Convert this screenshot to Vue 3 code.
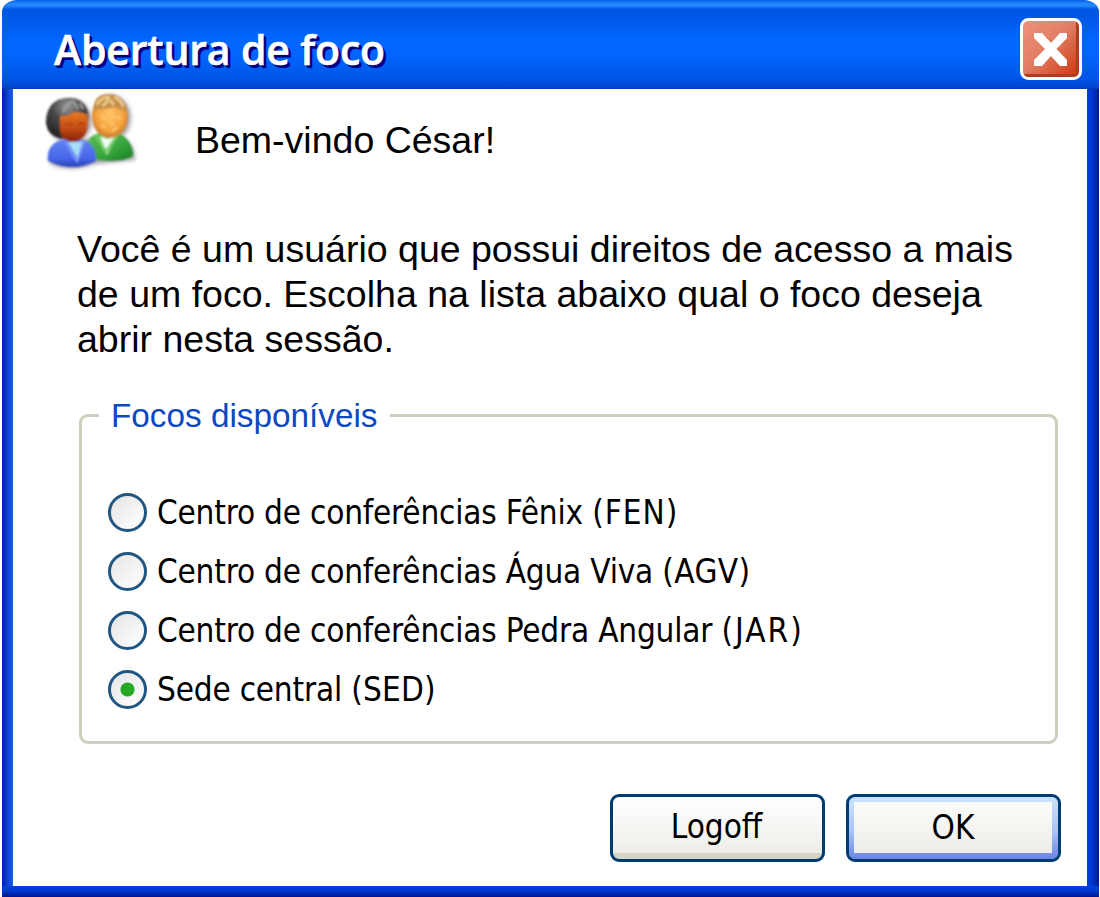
<script setup>
import { ref } from 'vue'

const options = [
  { id: 'FEN', name: 'Centro de conferências Fênix' },
  { id: 'AGV', name: 'Centro de conferências Água Viva' },
  { id: 'JAR', name: 'Centro de conferências Pedra Angular' },
  { id: 'SED', name: 'Sede central' },
]
const selected = ref('SED')
</script>

<template>
  <main class="window">
    <header class="titlebar">
      <h1>Abertura de foco</h1>
      <button class="close" aria-label="Fechar">
        <svg viewBox="0 0 62 62" width="62" height="62">
          <defs>
            <linearGradient id="red" x1="0.1" y1="0.1" x2="1" y2="1">
              <stop offset="0" stop-color="#ec8e78" />
              <stop offset="0.4" stop-color="#e27d64" />
              <stop offset="1" stop-color="#c93208" />
            </linearGradient>
          </defs>
          <rect x="1.5" y="1.5" width="59" height="59" rx="7" fill="url(#red)" />
          <path d="M57.5 4V57.5H4" fill="none" stroke="#b03b20" stroke-width="3" />
          <rect x="1.5" y="1.5" width="59" height="59" rx="7" fill="none" stroke="#fff" stroke-width="3" />
          <path d="M14 15H22L31 25 40 15H47V20L36.5 31 47 42V48H40L31 38 22 48H14V42L25 31 14 20Z" fill="#fff" />
        </svg>
      </button>
    </header>

    <section class="body">
      <div class="welcome">
        <svg class="users" viewBox="0 0 120 95" width="120" height="95">
          <defs>
            <radialGradient id="hair" cx="0.5" cy="0.2" r="0.7"><stop offset="0" stop-color="#999" /><stop offset="0.5" stop-color="#484848" /><stop offset="1" stop-color="#272727" /></radialGradient>
            <linearGradient id="dark" x1="0" y1="0" x2="0" y2="1"><stop offset="0" stop-color="#e57a22" /><stop offset="0.5" stop-color="#c84f14" /><stop offset="1" stop-color="#841f09" /></linearGradient>
            <radialGradient id="light" cx="0.5" cy="0.45" r="0.6"><stop offset="0" stop-color="#ffc568" /><stop offset="0.65" stop-color="#f5a13d" /><stop offset="1" stop-color="#bb6e20" /></radialGradient>
            <linearGradient id="blue" x1="0" y1="0" x2="0" y2="1"><stop offset="0" stop-color="#6384f4" /><stop offset="0.7" stop-color="#4867e9" /><stop offset="1" stop-color="#2641b5" /></linearGradient>
            <linearGradient id="green" x1="0" y1="0" x2="1" y2="1"><stop offset="0" stop-color="#60bb58" /><stop offset="0.6" stop-color="#35a43b" /><stop offset="1" stop-color="#177d21" /></linearGradient>
            <filter id="shade" x="-30%" y="-30%" width="160%" height="160%"><feGaussianBlur stdDeviation="2" /></filter>
            <filter id="soft"><feGaussianBlur stdDeviation="0.9" /></filter>
          </defs>
          <g fill="#554a60" opacity="0.5" filter="url(#shade)">
            <ellipse cx="40" cy="36" rx="22" ry="22" />
            <ellipse cx="83" cy="33" rx="18" ry="22" />
            <path d="M20 79Q20 56 38 56L90 51Q105 58 105 75L65 79Q40 88 20 79Z" />
          </g>
          <g filter="url(#soft)">
            <path d="M57 60Q58 50 70 48H88Q103 55 103 71Q90 79 63 74Z" fill="url(#green)" />
            <path d="M70 51L78 54 87 50 77 70Z" fill="#f0fff0" />
            <path d="M66 50L76 67 88 49" fill="none" stroke="#71ce65" stroke-width="3" />
            <ellipse cx="80" cy="31" rx="18" ry="22" fill="url(#light)" />
            <path d="M63 25Q64 9 78 9Q94 9 97 26Q87 24 84 22Q77 24 63 25Z" fill="#c48d48" />
            <path d="M67 20Q70 13 78 12M79 11Q78 18 72 21M84 12Q92 15 93 22M80 15L84 20" fill="none" stroke="#efd18e" stroke-width="2.5" />
            <path d="M71 31L76 35M79 30L84 34M87 31L91 34M71 40L75 43M79 37L84 40M82 46L87 43" fill="none" stroke="#ffc46b" stroke-width="2.5" />
            <path d="M18 76Q16 62 28 56L41 53 56 56Q67 62 66 76Q43 88 18 76Z" fill="url(#blue)" />
            <path d="M38 57H54L48 74Z" fill="#a7def7" />
            <path d="M36 57L47 76 53 58" fill="none" stroke="#819dff" stroke-width="2" />
            <path d="M16 37Q17 13 39 13Q57 13 59 33L51 48 32 54Q17 51 16 37Z" fill="url(#hair)" />
            <path d="M30 31Q40 31 44 27Q52 27 58 30Q60 55 43 57Q30 56 30 43Z" fill="url(#dark)" />
            <path d="M33 28Q35 18 44 16M44 17L48 24M50 18L53 24" fill="none" stroke="#a0a0a0" stroke-width="2" />
            <path d="M35 40Q39 37 43 40M48 39Q52 37 55 39M39 49Q45 51 51 48" fill="none" stroke="#a9380d" stroke-width="1.5" />
          </g>
        </svg>
        <h2>Bem-vindo César!</h2>
      </div>

      <p class="message">
        <span>Você é um usuário que possui direitos de acesso a mais</span>
        <span>de um foco. Escolha na lista abaixo qual o foco deseja</span>
        <span>abrir nesta sessão.</span>
      </p>

      <fieldset>
        <legend>Focos disponíveis</legend>
        <label v-for="o in options" :key="o.id">
          <input v-model="selected" type="radio" name="foco" :value="o.id" />
          <span>{{ o.name }} <span class="code" :class="o.id.toLowerCase()">({{ o.id }})</span></span>
        </label>
      </fieldset>

      <footer>
        <button class="btn">Logoff</button>
        <button class="btn primary">OK</button>
      </footer>
    </section>
  </main>
</template>

<style>
body { background: #fff; }
</style>

<style scoped>
* { box-sizing: border-box; }
button { padding: 0; margin: 0; cursor: pointer; }
.window {
  width: 1097px;
  height: 897px;
  margin-left: 2px;
  display: flex;
  flex-direction: column;
  overflow: hidden;
  border-radius: 15px 15px 0 0 / 12px 12px 0 0;
  color: #000;
  font-family: "Liberation Sans", Arial, sans-serif;
}
.titlebar {
  height: 89px;
  flex: none;
  display: flex;
  align-items: flex-start;
  justify-content: space-between;
  padding: 18px 17px 0 52px;
  background: linear-gradient(#0560e8 0, #268aff 4px, #2086fc 6px, #0057e1 9px, #0057e4 15px, #0066ff 40px, #0066ff 53px, #0056e8 78px, #0049d5 86px, #003dae 89px);
}
h1 {
  margin: 5px 0 0;
  color: #fff;
  font: 600 41px/52px "Trebuchet MS", "Open Sans", sans-serif;
  letter-spacing: -0.15px;
  -webkit-text-stroke: 0.6px #fff;
  text-shadow: 2px 2px 0 #000080, 3px 3px 0 #000080;
  white-space: nowrap;
}
.close { width: 62px; height: 62px; border: 0; background: none; }
.close svg { display: block; }
.body {
  flex: 1;
  display: flex;
  flex-direction: column;
  border-style: solid;
  border-width: 0 12px 11px 11px;
  border-color: transparent;
  background:
    linear-gradient(#fff, #fff) padding-box,
    linear-gradient(#0040e0, #0036cc 50%, #001590) bottom / 100% 11px no-repeat border-box,
    linear-gradient(90deg, #0018c4, #0b3edb 50%, #1a60e4) left / 11px 100% no-repeat border-box,
    linear-gradient(90deg, #0041df, #0034cc 50%, #001590) right / 12px 100% no-repeat border-box;
}
.welcome { display: flex; height: 91px; }
.users { margin: -4px 0 0 17px; flex: none; }
h2 { margin: 30px 0 0 45px; font-size: 37.5px; line-height: 42px; font-weight: 400; white-space: nowrap; }
.message { margin: 47px 0 0 64px; font-size: 37.5px; line-height: 45px; white-space: nowrap; }
.message span { display: block; }
fieldset {
  width: 979px;
  height: 347px;
  margin: 35px 0 0 66px;
  padding: 49px 0 0 26px;
  border: 3px solid #cecebe;
  border-radius: 9px;
  min-width: 0;
}
legend {
  height: 37px;
  margin-left: -9px;
  padding: 0 12px 0 12px;
  color: #0b48c2;
  font-size: 33.3px;
  line-height: 37px;
}
label {
  display: flex;
  align-items: center;
  height: 59px;
  font: 33px/44px "DejaVu Sans Condensed", Tahoma, "DejaVu Sans", sans-serif;
  font-stretch: condensed;
  letter-spacing: -0.2px;
  white-space: nowrap;
}
.code { letter-spacing: 0.4px; }
.code.fen { letter-spacing: 1px; }
.code.jar { letter-spacing: 2px; }
.code.sed { letter-spacing: 0.2px; }
input {
  appearance: none;
  flex: none;
  width: 39px;
  height: 39px;
  margin: 0 10px 0 0;
  border: 3px solid #205681;
  border-radius: 50%;
  background: linear-gradient(135deg, #e5e5e5, #f2f2f2 50%, #fff);
}
input:checked {
  background: radial-gradient(circle at 50% 50%, #27a825 0 6.5px, transparent 7.5px), linear-gradient(135deg, #e5e5e5, #f2f2f2 50%, #fff);
}
footer { display: flex; gap: 21px; margin: 50px 0 0 597px; }
.btn {
  width: 215px;
  height: 68px;
  border: 3px solid #003c74;
  border-radius: 9px;
  background: linear-gradient(#fff, #eeede8 56px, #d6d3c8 56px, #d6d3c8 62px);
  color: #000;
  font: 33px/54px "DejaVu Sans Condensed", Tahoma, "DejaVu Sans", sans-serif;
  font-stretch: condensed;
  padding: 0 2px 2px 0;
}
.btn.primary {
  padding: 5px 6px 6px 5px;
  background:
    linear-gradient(#fcfcfa, #edece7) content-box,
    linear-gradient(#cce4ff, #a9c4f5 55%, #6985e5) padding-box;
  line-height: 48px;
}
</style>
